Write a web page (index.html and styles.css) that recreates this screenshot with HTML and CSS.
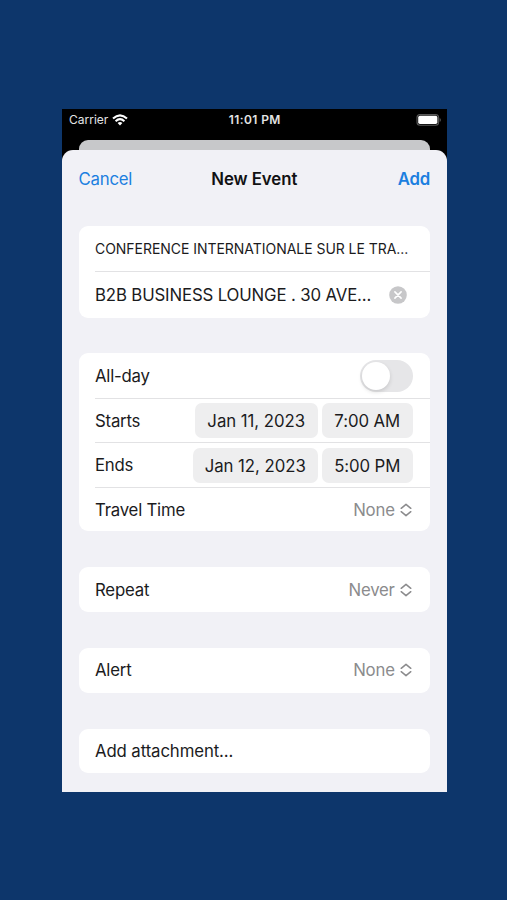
FILE: index.html
```html
<!DOCTYPE html>
<html lang="en">
<head>
<meta charset="utf-8">
<title>New Event</title>
<link rel="stylesheet" href="styles.css">
</head>
<body>
<main class="phone">
  <div class="status">
    <div class="carrier"><span>Carrier</span>
      <svg class="wifi" width="16" height="12" viewBox="0 0 16 12" fill="none" stroke="#fff" stroke-width="2.1"><path d="M1 4.5Q8-1.9 15 4.5"/><path d="M3.6 7.2Q8 3.2 12.4 7.2"/><path d="M5.6 9.1Q8 7.1 10.4 9.1L8 11.6Z" fill="#fff" stroke="none"/></svg>
    </div>
    <div class="clock">11:01 PM</div>
    <svg class="battery" width="25" height="12" viewBox="0 0 25 12"><rect x="1" y=".6" width="21.6" height="10.6" rx="3" fill="none" stroke="#585858" stroke-width="1.1"/><rect x="2.2" y="1.8" width="19.2" height="8.2" rx="1.8" fill="#fff"/><path d="M23.6 4v4q1.3-.6 1.3-2t-1.3-2" fill="#585858"/></svg>
  </div>
  <div class="behind"></div>
  <section class="sheet">
    <header class="nav"><span class="cancel">Cancel</span><h1>New Event</h1><span class="add">Add</span></header>
    <div class="group details">
      <div class="row"><span class="title">CONFERENCE INTERNATIONALE SUR LE TRA...</span></div>
      <div class="row"><span class="place">B2B BUSINESS LOUNGE . 30 AVE...</span>
        <svg class="clear" width="18" height="18" viewBox="0 0 18 18"><circle cx="9" cy="9" r="8.8" fill="#c7c7c9"/><path d="m5.9 5.9 6.2 6.2m0-6.2-6.2 6.2" stroke="#fff" stroke-width="1.6" stroke-linecap="round"/></svg>
      </div>
    </div>
    <div class="group schedule">
      <div class="row"><span>All-day</span><span class="switch"></span></div>
      <div class="row"><span>Starts</span><span class="pills"><span class="pill date-start">Jan 11, 2023</span><span class="pill time">7:00 AM</span></span></div>
      <div class="row"><span>Ends</span><span class="pills"><span class="pill date-end">Jan 12, 2023</span><span class="pill time">5:00 PM</span></span></div>
      <div class="row"><span>Travel Time</span><span class="value">None<svg width="12" height="14" viewBox="0 0 12 14"><path d="m1.2 5.3 4.8-4 4.8 4M1.2 8.7l4.8 4 4.8-4"/></svg></span></div>
    </div>
    <div class="group"><div class="row"><span>Repeat</span><span class="value">Never<svg width="12" height="14" viewBox="0 0 12 14"><path d="m1.2 5.3 4.8-4 4.8 4M1.2 8.7l4.8 4 4.8-4"/></svg></span></div></div>
    <div class="group"><div class="row"><span>Alert</span><span class="value">None<svg width="12" height="14" viewBox="0 0 12 14"><path d="m1.2 5.3 4.8-4 4.8 4M1.2 8.7l4.8 4 4.8-4"/></svg></span></div></div>
    <div class="group"><div class="row"><span class="attach">Add attachment...</span></div></div>
  </section>
</main>
</body>
</html>
```
FILE: styles.css
```css
* { box-sizing: border-box; }
body {
  margin: 0;
  height: 900px;
  padding: 109px 60.5px 0 62px;
  overflow: hidden;
  background: #0d366b;
  color: #1b1b1d;
  font: 16.8px/20px Inter, "Liberation Sans", sans-serif;
  letter-spacing: -0.22px;
  white-space: nowrap;
}
.phone { height: 683px; display: flex; flex-direction: column; background: #000; }
.status {
  flex: none;
  height: 31px;
  padding: 0 6px 9px 7px;
  display: grid;
  grid-template-columns: 1fr auto 1fr;
  align-items: center;
  color: #e4e4e4;
  font-size: 12px;
  letter-spacing: 0;
}
.carrier { display: flex; align-items: center; gap: 4px; }
.clock { font-weight: 600; letter-spacing: 0.4px; }
.battery { justify-self: end; }
.behind { flex: none; height: 10px; margin: 0 16.5px; border-radius: 9px 9px 0 0; background: #c7c8ca; }
.sheet { flex: 1; min-height: 0; padding: 0 16.5px; border-radius: 11px 11px 0 0; background: #f1f1f6; }
.nav {
  height: 76px;
  padding-bottom: 18px;
  display: grid;
  grid-template-columns: 1fr auto 1fr;
  align-items: center;
  color: #1c7fe0;
}
.nav h1 { margin: 0; color: #111113; font-size: inherit; font-weight: 600; letter-spacing: -0.05px; }
.add { justify-self: end; font-weight: 600; }
.group { margin-bottom: 36px; border-radius: 9px; background: #fff; }
.group:last-child { margin-bottom: 0; }
.row {
  position: relative;
  height: 44.6px;
  padding: 0 17.3px 0 16.5px;
  display: flex;
  align-items: center;
  justify-content: space-between;
}
.row + .row::before {
  content: "";
  position: absolute;
  top: 0;
  left: 16px;
  right: 0;
  height: 1px;
  background: #e2e2e4;
}
.details { margin-bottom: 35px; }
.details .row { height: 47px; }
.details .row:first-child { height: 45px; padding-right: 0; }
.schedule .row { padding-top: 1.6px; }
.title { font-size: 14px; letter-spacing: -0.04px; }
.place { letter-spacing: -0.15px; }
.attach { letter-spacing: -0.12px; }
.clear { margin-right: 6px; }
.switch { width: 53px; height: 32px; border-radius: 16px; background: #e6e6e8; }
.switch::before {
  content: "";
  display: block;
  width: 28px;
  height: 28px;
  margin: 2px;
  border-radius: 50%;
  background: #fff;
  box-shadow: 0 2px 4px #0002;
}
.pills { display: flex; gap: 4px; }
.pill { height: 35px; padding-top: 1px; border-radius: 7px; background: #eeeeef; line-height: 34px; text-align: center; letter-spacing: -0.05px; }
.date-start { width: 123px; }
.date-end { width: 125px; }
.time { width: 91px; letter-spacing: -0.1px; }
.value { display: flex; align-items: center; gap: 5px; color: #8b8b8d; }
.value svg { margin-right: 1px; fill: none; stroke: #8b8b8d; stroke-width: 1.5; stroke-linecap: round; stroke-linejoin: round; }
```
